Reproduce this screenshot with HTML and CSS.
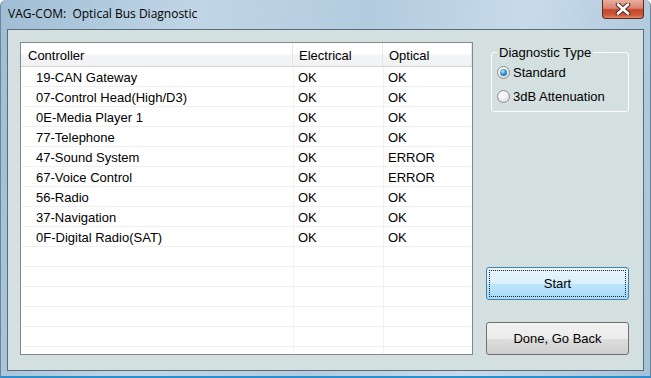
FILE: index.html
```html
<!DOCTYPE html>
<html lang="en">
<head>
    <meta charset="UTF-8">
    <title>VAG-COM: Optical Bus Diagnostic</title>
    <link rel="stylesheet" href="styles.css">
</head>
<body>
<div class="window">
    <div class="titlebar">
        <span class="title">VAG-COM:&nbsp; Optical Bus Diagnostic</span>
        <button class="close-btn" type="button">
            <svg width="18" height="12" viewBox="0 0 18 12">
                <path d="M4 1.5 L14 10.5 M14 1.5 L4 10.5" stroke="#4a2a25" stroke-width="4.6" fill="none" stroke-linecap="round"/>
                <path d="M4 1.5 L14 10.5 M14 1.5 L4 10.5" stroke="#ffffff" stroke-width="2.6" fill="none" stroke-linecap="round"/>
            </svg>
        </button>
    </div>
    <div class="client">
        <div class="listview">
            <div class="lv-row lv-header">
                <div class="cell">Controller</div>
                <div class="cell">Electrical</div>
                <div class="cell">Optical</div>
            </div>
            <div class="lv-row"><div class="cell">19-CAN Gateway</div><div class="cell">OK</div><div class="cell">OK</div></div>
            <div class="lv-row"><div class="cell">07-Control Head(High/D3)</div><div class="cell">OK</div><div class="cell">OK</div></div>
            <div class="lv-row"><div class="cell">0E-Media Player 1</div><div class="cell">OK</div><div class="cell">OK</div></div>
            <div class="lv-row"><div class="cell">77-Telephone</div><div class="cell">OK</div><div class="cell">OK</div></div>
            <div class="lv-row"><div class="cell">47-Sound System</div><div class="cell">OK</div><div class="cell">ERROR</div></div>
            <div class="lv-row"><div class="cell">67-Voice Control</div><div class="cell">OK</div><div class="cell">ERROR</div></div>
            <div class="lv-row"><div class="cell">56-Radio</div><div class="cell">OK</div><div class="cell">OK</div></div>
            <div class="lv-row"><div class="cell">37-Navigation</div><div class="cell">OK</div><div class="cell">OK</div></div>
            <div class="lv-row"><div class="cell">0F-Digital Radio(SAT)</div><div class="cell">OK</div><div class="cell">OK</div></div>
            <div class="lv-row"><div class="cell"></div><div class="cell"></div><div class="cell"></div></div>
            <div class="lv-row"><div class="cell"></div><div class="cell"></div><div class="cell"></div></div>
            <div class="lv-row"><div class="cell"></div><div class="cell"></div><div class="cell"></div></div>
            <div class="lv-row"><div class="cell"></div><div class="cell"></div><div class="cell"></div></div>
            <div class="lv-row"><div class="cell"></div><div class="cell"></div><div class="cell"></div></div>
            <div class="lv-row"><div class="cell"></div><div class="cell"></div><div class="cell"></div></div>
        </div>
        <div class="side">
            <fieldset class="groupbox">
                <legend>Diagnostic Type</legend>
                <label class="radio"><span class="radio-dot checked"></span>Standard</label>
                <label class="radio"><span class="radio-dot"></span>3dB Attenuation</label>
            </fieldset>
            <button class="btn btn-start" type="button"><span class="focus">Start</span></button>
            <button class="btn btn-done" type="button">Done, Go Back</button>
        </div>
    </div>
</div>
</body>
</html>
```

FILE: styles.css
```css
body {
    margin: 0;
    font-family: 'Liberation Sans', Arial, sans-serif;
    font-size: 13px;
    color: #000;
}
.window {
    width: 651px;
    height: 378px;
    box-sizing: border-box;
    display: flex;
    flex-direction: column;
    padding: 0 6px 5px 6px;
    background: linear-gradient(100deg, #9fbdd4 0%, #c0d6e6 28%, #b2cbde 52%, #c8dbea 74%, #a6c2d7 100%);
    border-left: 1px solid #6d8599;
    border-right: 1px solid #6d8599;
    border-bottom: 2px solid #2a8fd0;
    border-radius: 6px 6px 0 0;
}
.titlebar {
    height: 29px;
    display: flex;
    align-items: flex-start;
    flex-shrink: 0;
}
.title {
    font-family: 'Open Sans', 'Noto Sans', sans-serif;
    font-size: 12px;
    line-height: 16px;
    margin-top: 6px;
    padding-left: 1px;
    color: #000;
}
.close-btn {
    margin-left: auto;
    width: 42px;
    height: 19px;
    padding: 0;
    border: 1px solid #5b2a23;
    border-top: none;
    border-radius: 0 0 4px 4px;
    background: linear-gradient(to bottom, #e9ad9c 0%, #d98570 45%, #c4452a 55%, #cf5c3c 85%, #e08a6c 100%);
    display: flex;
    align-items: center;
    justify-content: center;
}
.client {
    flex: 1;
    display: flex;
    border: 1px solid #5a6b79;
    background-color: #d4e0df;
    padding: 12px 13px 0 12px;
}
.listview {
    width: 453px;
    height: 313px;
    box-sizing: border-box;
    border: 1px solid #828790;
    background-color: #fff;
    overflow: hidden;
}
.lv-row {
    display: grid;
    grid-template-columns: 271px 90px 90px;
    height: 20px;
    box-sizing: border-box;
    border-bottom: 1px solid #f0f0f0;
    margin-left: 1px;
}
.lv-row .cell {
    padding-top: 2px;
    line-height: 17px;
    white-space: nowrap;
    padding-left: 4px;
}
.lv-row .cell:first-child {
    padding-left: 14px;
}
.lv-row .cell:nth-child(2),
.lv-row .cell:nth-child(3) {
    border-left: 1px solid #f0f0f0;
}
.lv-row .cell:nth-child(3) {
    border-right: 1px solid #f0f0f0;
}
.lv-header {
    height: 24px;
    margin-left: 0;
    border-bottom: 1px solid #d5d5d5;
    background: linear-gradient(to bottom, #ffffff 0%, #ffffff 45%, #f3f4f6 55%, #f1f2f4 100%);
}
.lv-header .cell {
    padding-top: 3px;
    line-height: 20px;
    padding-left: 6px;
}
.lv-header .cell:first-child {
    padding-left: 7px;
}
.lv-header .cell:nth-child(2),
.lv-header .cell:nth-child(3) {
    border-left: 1px solid #e3e6ea;
}
.lv-header .cell:nth-child(3) {
    border-right: 1px solid #e3e6ea;
}
.side {
    width: 143px;
    margin-left: 13px;
    display: flex;
    flex-direction: column;
}
.groupbox {
    margin: 3px 0 0 5px;
    width: 138px;
    box-sizing: border-box;
    border: 1px solid #fdfefe;
    border-radius: 3px;
    padding: 4px 5px 7px 5px;
    display: flex;
    flex-direction: column;
    gap: 8px;
}
.groupbox legend {
    padding: 0 2px;
    line-height: 15px;
}
.radio {
    display: flex;
    align-items: center;
    height: 16px;
}
.radio-dot {
    width: 13px;
    height: 13px;
    box-sizing: border-box;
    border-radius: 50%;
    border: 1px solid #8e8f8f;
    background: radial-gradient(circle at 40% 35%, #ffffff 0%, #f0f0f0 45%, #cfcfcf 100%);
    margin-right: 3px;
    display: flex;
    align-items: center;
    justify-content: center;
}
.radio-dot.checked::after {
    content: "";
    width: 7px;
    height: 7px;
    border-radius: 50%;
    background: radial-gradient(circle at 40% 35%, #b9ecff 0%, #3a93d2 45%, #0f4c82 100%);
}
.btn {
    width: 143px;
    height: 33px;
    box-sizing: border-box;
    border: 1px solid #707070;
    border-radius: 3px;
    font-family: 'Liberation Sans', Arial, sans-serif;
    font-size: 13px;
    color: #000;
    padding: 2px;
    background: linear-gradient(to bottom, #f2f2f2 0%, #ebebeb 50%, #dddddd 51%, #cfcfcf 100%);
}
.btn-start {
    margin-top: 155px;
    border-color: #3c7fb1;
    background: linear-gradient(to bottom, #eaf6fd 0%, #d9f0fc 50%, #bee6fd 51%, #a7d9f5 100%);
}
.btn-start .focus {
    display: flex;
    align-items: center;
    justify-content: center;
    height: 100%;
    border: 1px dotted #222;
    box-sizing: border-box;
}
.btn-done {
    margin-top: 22px;
}
```
